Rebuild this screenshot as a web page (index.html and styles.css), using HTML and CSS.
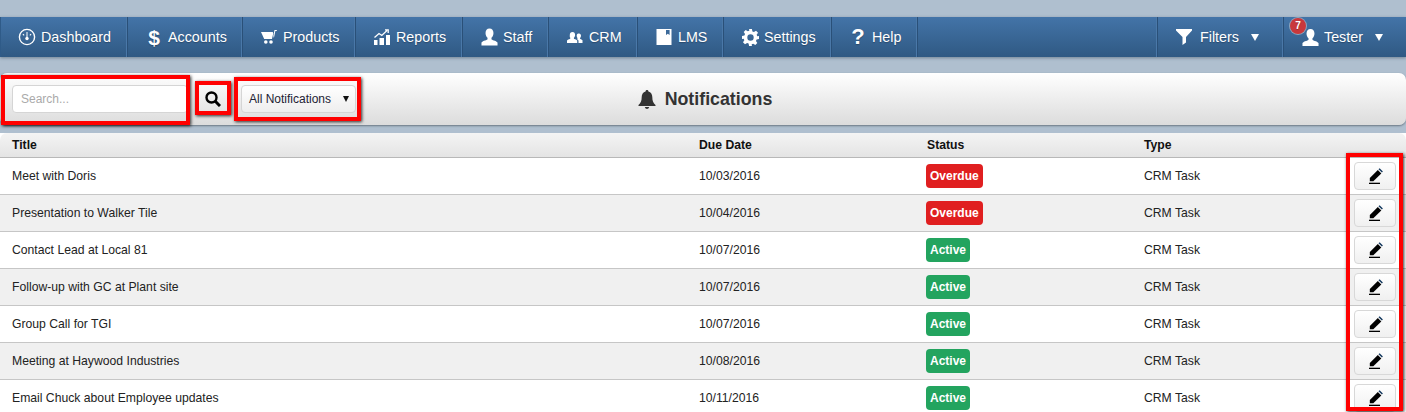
FILE: index.html
```html
<!DOCTYPE html>
<html lang="en">
<head>
<meta charset="utf-8">
<title>Notifications</title>
<link rel="stylesheet" href="styles.css">
</head>
<body>
<svg class="defs" width="0" height="0" aria-hidden="true">
  <symbol id="i-user" viewBox="0 0 18 18"><path d="M9 0c2.700 0 4.200 2 4.200 4.700 0 2.100-.9 4-2.100 5.100v1.500c0 .9 4.900 1.400 6.400 3.500V18H.5v-3.200c1.500-2.100 6.400-2.600 6.400-3.500V9.800C5.700 8.700 4.800 6.800 4.800 4.700 4.800 2 6.300 0 9 0z"/></symbol>
  <symbol id="i-pen" viewBox="0 0 14 16"><path d="M.8 10l8-8 3.500 3.500-8 7.800H.8z"/><path d="M9.500 1.300l1.100-1.100 3.300 3.300-1 1.100z" fill="#10365c"/><path d="M0 14.700h11V16H0z"/></symbol>
</svg>

<div class="page">
  <nav class="nav">
    <a class="nav-item"><span class="ico"><svg width="18" height="18" viewBox="0 0 18 18"><circle cx="9" cy="9" r="7.600" fill="none" stroke="#fff" stroke-width="1.400"/><circle cx="9" cy="10.500" r="1.700" fill="#fff"/><path d="M8.500 4h1v5h-1zM4.500 6.500l.8-.7 1.200 1.200-.7.700zM13.500 6.500l-.8-.7-1.200 1.200.7.700z" fill="#fff"/></svg></span><span>Dashboard</span></a>
    <a class="nav-item"><b class="ico glyph">$</b><span>Accounts</span></a>
    <a class="nav-item"><span class="ico"><svg width="16" height="14" viewBox="0 0 16 14"><path d="M0 2h11.800l.4 1.500L11 9H3.200z" fill="#fff"/><path d="M12.300 6l1.200-6h2.300v1h-1.400l-1.500 7z" fill="#fff"/><circle cx="4.800" cy="12" r="1.800" fill="#fff"/><circle cx="10" cy="12" r="1.800" fill="#fff"/></svg></span><span>Products</span></a>
    <a class="nav-item"><span class="ico"><svg width="16" height="16" viewBox="0 0 16 16"><path d="M0 11h3.500v5H0zM5.500 9H10v7H5.500zM12 6h4v10h-4z" fill="#fff"/><path d="M.5 8.500L5 4.500l2.800 2L13 1.500M11 .8h3.200V4" fill="none" stroke="#fff" stroke-width="1.300"/></svg></span><span>Reports</span></a>
    <a class="nav-item"><span class="ico"><svg width="17" height="18" fill="#fff"><use href="#i-user"/></svg></span><span>Staff</span></a>
    <a class="nav-item"><span class="ico"><svg width="16" height="11" viewBox="0 0 16 11" fill="#fff"><path d="M5.500 0c1.700 0 2.600 1.300 2.600 2.900 0 1.100-.5 2.200-1.200 2.800v.9c0 .6 2.400.9 3.300 2V11H0V8.600c.9-1.100 3.300-1.400 3.300-2v-.9C2.600 5.100 2.800 4 2.800 2.900 2.800 1.300 3.800 0 5.500 0z"/><path d="M12 1.500c1.300 0 2 1 2 2.300 0 .9-.4 1.700-.9 2.200v.7c0 .4 1.700.7 2.400 1.500V11h-4V8.500l-1.500-1.400c.3-.2.500-.3.500-.5V6c-.5-.5-.8-1.300-.8-2.200 0-1.300.5-2.300 1.800-2.300z"/></svg></span><span>CRM</span></a>
    <a class="nav-item"><span class="ico"><svg width="16" height="16" viewBox="0 0 16 16"><path fill="#fff" fill-rule="evenodd" d="M.5 0h15v16H.5zM10 1v5l1.800-1.300L13.600 6V1z"/></svg></span><span>LMS</span></a>
    <a class="nav-item"><span class="ico"><svg width="17" height="17" viewBox="0 0 24 24"><path fill="#fff" fill-rule="evenodd" d="M10 0h4l.7 3.400 2.100.9 3-1.900 2.800 2.800-1.900 3 .9 2.100L24 10v4l-3.400.7-.9 2.100 1.900 3-2.800 2.800-3-1.900-2.100.9L14 24h-4l-.7-3.400-2.100-.9-3 1.900-2.800-2.800 1.900-3-.9-2.100L0 14v-4l3.400-.7.9-2.100-1.900-3 2.800-2.800 3 1.900 2.100-.9zM12 7.500a4.500 4.500 0 1 0 0 9 4.500 4.500 0 0 0 0-9z"/></svg></span><span>Settings</span></a>
    <a class="nav-item"><b class="ico glyph help">?</b><span>Help</span></a>
    <div class="nav-spacer"></div>
    <a class="nav-item"><span class="ico"><svg width="16" height="16" viewBox="0 0 16 16"><path fill="#fff" d="M0 0h16v1.500L10 8v5.500L6.500 16V8L0 1.500z"/></svg></span><span class="lbl-wide">Filters</span><i class="caret"></i></a>
    <a class="nav-item nav-user"><span class="badge-count">7</span><span class="ico"><svg width="17" height="17" fill="#fff"><use href="#i-user"/></svg></span><span>Tester</span><i class="caret"></i></a>
  </nav>

  <header class="toolbar">
    <div class="tools">
      <input class="search" type="text" placeholder="Search...">
      <button class="search-btn" aria-label="Search"><svg width="16" height="16" viewBox="0 0 16 16"><circle cx="6.500" cy="6.500" r="5" fill="none" stroke="#000" stroke-width="2.400"/><path d="M10 10l5 5" stroke="#000" stroke-width="3"/></svg></button>
      <div class="select"><span>All Notifications</span><i class="select-caret"></i></div>
    </div>
    <h1 class="title"><svg width="18" height="19" viewBox="0 0 18 19"><path fill="#333" d="M9 0c.9 0 1.400.6 1.400 1.400C13 2 14.300 4.300 14.300 7c0 4 1 6 3.200 8v1H.5v-1c2.200-2 3.200-4 3.200-8 0-2.700 1.300-5 3.900-5.600C7.600.6 8.100 0 9 0zM6.800 17h4.400c-.3 1.200-1.200 2-2.200 2s-1.900-.8-2.200-2z"/></svg>Notifications</h1>
  </header>

  <section class="table">
    <div class="row head"><div>Title</div><div>Due Date</div><div>Status</div><div>Type</div><div></div></div>
    <div class="row"><div>Meet with Doris</div><div>10/03/2016</div><div><span class="tag overdue">Overdue</span></div><div>CRM Task</div><div class="act"><button class="edit"><svg width="14" height="16"><use href="#i-pen"/></svg></button></div></div>
    <div class="row alt"><div>Presentation to Walker Tile</div><div>10/04/2016</div><div><span class="tag overdue">Overdue</span></div><div>CRM Task</div><div class="act"><button class="edit"><svg width="14" height="16"><use href="#i-pen"/></svg></button></div></div>
    <div class="row"><div>Contact Lead at Local 81</div><div>10/07/2016</div><div><span class="tag active">Active</span></div><div>CRM Task</div><div class="act"><button class="edit"><svg width="14" height="16"><use href="#i-pen"/></svg></button></div></div>
    <div class="row alt"><div>Follow-up with GC at Plant site</div><div>10/07/2016</div><div><span class="tag active">Active</span></div><div>CRM Task</div><div class="act"><button class="edit"><svg width="14" height="16"><use href="#i-pen"/></svg></button></div></div>
    <div class="row"><div>Group Call for TGI</div><div>10/07/2016</div><div><span class="tag active">Active</span></div><div>CRM Task</div><div class="act"><button class="edit"><svg width="14" height="16"><use href="#i-pen"/></svg></button></div></div>
    <div class="row alt"><div>Meeting at Haywood Industries</div><div>10/08/2016</div><div><span class="tag active">Active</span></div><div>CRM Task</div><div class="act"><button class="edit"><svg width="14" height="16"><use href="#i-pen"/></svg></button></div></div>
    <div class="row"><div>Email Chuck about Employee updates</div><div>10/11/2016</div><div><span class="tag active">Active</span></div><div>CRM Task</div><div class="act"><button class="edit"><svg width="14" height="16"><use href="#i-pen"/></svg></button></div></div>
  </section>

  <div class="mark mark-search"></div>
  <div class="mark mark-btn"></div>
  <div class="mark mark-select"></div>
  <div class="mark mark-edit"></div>
</div>
</body>
</html>
```
FILE: styles.css
```css
* { box-sizing: border-box; }
html, body { margin: 0; height: 100%; }
body {
  background: #afbfcf;
  font-family: "Liberation Sans", Arial, sans-serif;
  color: #222;
  overflow: hidden;
}
.defs { position: absolute; }
.page { position: relative; height: 412px; overflow: hidden; padding-top: 17px; }

.nav {
  display: grid;
  grid-template-columns: 127px 115px 113px 107px 86px 89px 86px 108px 86px 1fr 126px 122px;
  height: 40px;
  padding-left: 1px;
  background: linear-gradient(#4374a8, #2f5983);
  box-shadow: 0 1px 3px rgba(40, 60, 80, .45), inset 1px 0 0 #2f5b88;
}
.nav-item {
  display: flex;
  align-items: center;
  gap: 4px;
  position: relative;
  padding-left: 16px;
  color: #fff;
  font-size: 14.300px;
  text-shadow: 0 1px 1px rgba(0, 0, 0, .25);
  border-right: 1px solid #2a5078;
  box-shadow: inset -1px 0 0 #4a78a8;
  white-space: nowrap;
}
.nav-item:nth-last-child(1) { border-right: 0; box-shadow: none; }
.nav-spacer { border-right: 1px solid #2a5078; box-shadow: inset -1px 0 0 #4a78a8; }
.ico {
  display: flex;
  flex: none;
  align-items: center;
  justify-content: center;
  width: 20px;
}
.glyph { font-size: 21px; line-height: 1; }
.help { font-size: 22px; }
.lbl-wide { margin-left: 2px; }
.caret {
  margin-left: 8px;
  width: 0; height: 0;
  border-left: 4.500px solid transparent;
  border-right: 4.500px solid transparent;
  border-top: 7px solid #fff;
}
.badge-count {
  position: absolute;
  left: 6px;
  top: 1px;
  width: 16px;
  height: 16px;
  border-radius: 50%;
  background: #c9383c;
  box-shadow: 0 0 0 1px #8ea6bd;
  color: #fff;
  font-size: 10px;
  font-weight: bold;
  line-height: 16px;
  text-align: center;
}

.toolbar {
  display: grid;
  grid-template-columns: 1fr auto 1fr;
  align-items: center;
  height: 52px;
  margin-top: 16px;
  padding-left: 4px;
  background: linear-gradient(#fff, #dcdcdc);
  border-radius: 7px;
  box-shadow: 0 1px 2px rgba(60, 70, 80, .6);
}
.tools { display: flex; align-items: center; padding-left: 8px; }
.search {
  width: 176px;
  height: 28px;
  padding: 0 8px;
  border: 1px solid #d5d5d5;
  border-radius: 4px;
  background: #fff;
  font: 12px "Liberation Sans", Arial, sans-serif;
}
.search::placeholder { color: #aaa; }
.search-btn {
  display: flex;
  margin-left: 17px;
  padding: 0;
  width: 16px;
  border: 0;
  background: none;
}
.select {
  display: flex;
  align-items: center;
  justify-content: space-between;
  width: 115px;
  height: 28px;
  margin-left: 20px;
  padding: 0 6px 0 7px;
  border: 1px solid #d5d5d5;
  border-radius: 4px;
  background: linear-gradient(#fff, #eee);
  color: #223;
  font-size: 12px;
}
.select-caret {
  width: 0; height: 0;
  border-left: 3.500px solid transparent;
  border-right: 3.500px solid transparent;
  border-top: 6px solid #111;
}
.title {
  display: flex;
  align-items: center;
  gap: 9px;
  margin: 0;
  font-size: 17.800px;
  color: #333;
}

.table { margin-top: 8px; background: #fff; }
.row {
  display: grid;
  grid-template-columns: 687px 228px 217px 1fr 52px;
  align-items: center;
  height: 37px;
  padding-left: 12px;
  font-size: 12.200px;
  color: #222;
  background: #fff;
  border-bottom: 1px solid #c6c6c6;
}
.row.alt { background: #f0f0f0; }
.row.head {
  height: 25px;
  font-weight: bold;
  color: #111;
  background: linear-gradient(#f4f4f4, #e4e4e4);
  border-bottom-color: #b8b8b8;
  border-radius: 7px 7px 0 0;
}
.tag {
  display: inline-block;
  height: 24px;
  margin-left: -1px;
  padding: 0 4px;
  border-radius: 4px;
  color: #fff;
  font-size: 12px;
  font-weight: bold;
  line-height: 24px;
}
.overdue { background: #e01f20; }
.active { background: #23a45f; }
.act { display: flex; }
.edit {
  display: flex;
  align-items: center;
  justify-content: center;
  width: 42px;
  height: 28px;
  padding: 0 0 0 2px;
  border: 1px solid #d8d8d8;
  border-radius: 4px;
  background: linear-gradient(#fff, #f0f0f0);
}

.mark {
  position: absolute;
  border: 4px solid #f00;
  box-shadow: 1px 1px 3px rgba(0, 0, 0, .8);
}
.mark-search { left: 1px; top: 75px; width: 189px; height: 50px; }
.mark-btn { left: 195px; top: 81px; width: 36px; height: 34px; }
.mark-select { left: 234px; top: 77px; width: 127px; height: 44px; }
.mark-edit { left: 1346px; top: 153px; width: 57px; height: 258px; }
```
